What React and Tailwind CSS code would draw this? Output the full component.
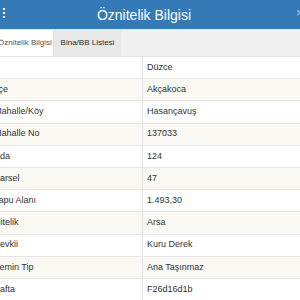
import React from 'react';

const rows = [
  { label: 'İl', value: 'Düzce' },
  { label: 'İlçe', value: 'Akçakoca' },
  { label: 'Mahalle/Köy', value: 'Hasançavuş' },
  { label: 'Mahalle No', value: '137033' },
  { label: 'Ada', value: '124' },
  { label: 'Parsel', value: '47' },
  { label: 'Tapu Alanı', value: '1.493,30' },
  { label: 'Nitelik', value: 'Arsa' },
  { label: 'Sevkii', value: 'Kuru Derek' },
  { label: 'Zemin Tip', value: 'Ana Taşınmaz' },
  { label: 'Pafta', value: 'F26d16d1b' },
];

export default function App() {
  return (
    <div className="w-[300px] h-[300px] overflow-hidden bg-white font-['Liberation_Sans',Arial,sans-serif]">
      {/* header */}
      <div className="relative h-[29px] bg-[#337ab7] flex items-center justify-center pr-[12px]">
        <div className="absolute left-[3px] top-[8px] flex flex-col gap-[2px]">
          <span className="block w-[2px] h-[2px] bg-white" />
          <span className="block w-[2px] h-[2px] bg-white" />
          <span className="block w-[2px] h-[2px] bg-white" />
        </div>
        <span className="text-white text-[14px] leading-none">Öznitelik Bilgisi</span>
        <span className="absolute left-[296px] top-[6px] text-white/60 text-[13px] leading-none">×</span>
      </div>
      <div className="h-px bg-[#e6e6e6]" />

      {/* tabs */}
      <div className="h-[27px] bg-[#f0f0f0] flex items-end border-b border-[#e2e2e2]">
        <div className="h-[26px] w-[58px] -ml-[4px] bg-white border-r border-[#e0e0e0] flex items-center pl-[2px] text-[8px] text-[#555] whitespace-nowrap">
          Öznitelik Bilgisi
        </div>
        <div className="h-[26px] w-[67px] bg-[#e8e8e8] flex items-center justify-center text-[8px] text-[#2a2a2a] whitespace-nowrap">
          Bina/BB Listesi
        </div>
      </div>

      {/* table */}
      <div className="-ml-[10px] w-[320px]">
        {rows.map((r, i) => (
          <div
            key={r.label}
            className={`flex h-[22.2px] border-b border-[#e6e6e6] text-[9px] text-[#333] ${i % 2 === 1 ? 'bg-[#f9f8f3]' : 'bg-white'}`}
          >
            <div className="w-[153px] px-[4px] flex items-center border-r border-[#e4e4e4] whitespace-nowrap">{r.label}</div>
            <div className="flex-1 px-[4px] flex items-center whitespace-nowrap">{r.value}</div>
          </div>
        ))}
      </div>
    </div>
  );
}
